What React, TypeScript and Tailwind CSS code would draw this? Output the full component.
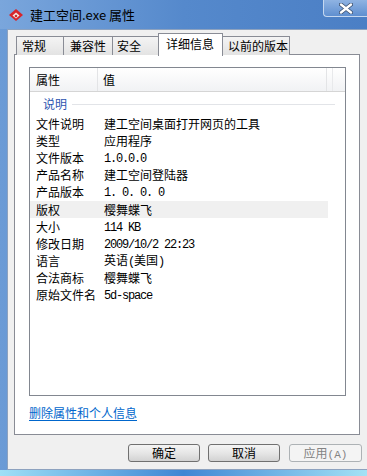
import React from "react";

const CJK = { fontFamily: '"Noto Sans CJK SC", "Noto Sans", sans-serif' };

function Txt({ s }: { s: string }) {
  const parts = s.match(/[\x20-\x7e]+|[^\x20-\x7e]+/g) || [];
  return (
    <>
      {parts.map((p, i) =>
        /^[\x20-\x7e]+$/.test(p) ? (
          <span
            key={i}
            className="text-[12px] tracking-[-1.2px] whitespace-pre"
            style={{ fontFamily: '"Liberation Mono", monospace' }}
          >
            {p}
          </span>
        ) : (
          <span key={i}>{p}</span>
        )
      )}
    </>
  );
}

const rows: [string, string][] = [
  ["文件说明", "建工空间桌面打开网页的工具"],
  ["类型", "应用程序"],
  ["文件版本", "1.0.0.0"],
  ["产品名称", "建工空间登陆器"],
  ["产品版本", "1. 0. 0. 0"],
  ["版权", "樱舞蝶飞"],
  ["大小", "114 KB"],
  ["修改日期", "2009/10/2 22:23"],
  ["语言", "英语(美国)"],
  ["合法商标", "樱舞蝶飞"],
  ["原始文件名", "5d-space"],
];

function Tab({ label, w, pl }: { label: string; w: string; pl: string }) {
  return (
    <div
      className={`${w} ${pl} h-[19px] border border-b-0 border-[#898c95] bg-gradient-to-b from-[#f4f4f4] to-[#e3e3e3] text-[12px] leading-[18px] text-black -ml-px first:ml-0`}
    >
      {label}
    </div>
  );
}

export default function App() {
  return (
    <div
      className="w-[367px] h-[476px] overflow-hidden flex flex-col relative bg-gradient-to-r from-[#6b9bd6] via-[#4d82c8] to-[#5b8fd0]"
      style={CJK}
    >
      {/* title bar */}
      <div className="h-[29px] flex items-center pl-[8px] shrink-0 bg-gradient-to-r from-[#7aa6dc] via-[#5589cc] to-[#4b7fc5]">
        <svg width="16" height="14" viewBox="0 0 16 14">
          <path d="M8 1 L15 7 L8 13 L1 7 Z" fill="#d8252a" />
          <path d="M8 4.5 L11.5 7.5 L8 10.5 L4.5 7.5 Z" fill="#f4e6e0" />
          <path d="M8 6.5 L9.5 8 L8 9.5 L6.5 8 Z" fill="#c11a20" />
        </svg>
        <span className="ml-[6px] text-[13px] text-black leading-none">建工空间.exe 属性</span>
      </div>
      {/* close button */}
      <div className="absolute top-0 right-0 w-[44px] h-[17px] border-l border-b border-[#c5d8f0] rounded-bl-[4px] bg-gradient-to-b from-[#8fb3e2] to-[#5f8fd0] flex items-center justify-center">
        <svg width="14" height="11" viewBox="0 0 14 11">
          <path d="M2 1.5 L12 9.5 M12 1.5 L2 9.5" stroke="#3a4f6e" strokeWidth="4" strokeLinecap="round" />
          <path d="M2 1.5 L12 9.5 M12 1.5 L2 9.5" stroke="#ffffff" strokeWidth="2.4" strokeLinecap="round" />
        </svg>
      </div>

      {/* body */}
      <div className="ml-[7px] h-[441px] shrink-0 bg-[#f0f0f0] border-l border-t border-b border-[#8da2bf] flex flex-col">
        {/* tabs */}
        <div className="h-[25px] flex items-end pl-[8px] relative z-10 shrink-0">
          <Tab label="常规" w="w-[48px]" pl="pl-[5px]" />
          <Tab label="兼容性" w="w-[50px]" pl="pl-[6px]" />
          <Tab label="安全" w="w-[47px]" pl="pl-[4px]" />
          <div className="-ml-px w-[65px] h-[23px] -mb-px border border-b-0 border-[#898c95] bg-white text-[12px] leading-[20px] pl-[7px] text-black">
            详细信息
          </div>
          <Tab label="以前的版本" w="w-[68px]" pl="pl-[5px]" />
        </div>
        {/* panel */}
        <div className="ml-[6px] w-[346px] h-[381px] -mt-px border border-[#898c95] bg-white flex flex-col shrink-0">
          <div className="mt-[12px] ml-[14px] w-[317px] h-[329px] border border-[#828790] bg-white flex flex-col">
            {/* header */}
            <div className="h-[24px] flex items-center bg-gradient-to-b from-[#ffffff] to-[#f1f2f4] border-b border-[#d5d5d5] text-[12px] text-black shrink-0">
              <div className="w-[68px] h-full flex items-center pl-[6px] border-r border-[#e3e4e6]">属性</div>
              <div className="w-[229px] h-full flex items-center pl-[5px] border-r border-[#e3e4e6]">值</div>
              <div className="w-[6px] h-full border-r border-[#e8e9eb]"></div>
            </div>
            {/* group */}
            <div className="h-[22px] flex items-center pl-[13px] pr-[10px] shrink-0 mt-[1px]">
              <span className="text-[12px] text-[#2c55b0]">说明</span>
              <div className="flex-1 h-px bg-[#e2e4e8] ml-[5px]"></div>
            </div>
            <div className="flex flex-col">
              {rows.map(([k, v], i) => (
                <div
                  key={i}
                  className={`h-[17.2px] w-[298px] flex items-center text-[12px] text-black ${
                    k === "版权" ? "bg-[#f0f0f0]" : ""
                  }`}
                >
                  <div className="w-[68px] pl-[6px] whitespace-nowrap">{k}</div>
                  <div className="pl-[6px] whitespace-nowrap">
                    <Txt s={v} />
                  </div>
                </div>
              ))}
            </div>
          </div>
          <div className="ml-[14px] mt-[9px] text-[12px] leading-[16px] text-[#0066cc] underline underline-offset-2">
            删除属性和个人信息
          </div>
        </div>
        {/* buttons */}
        <div className="flex mt-[9px] pl-[120px] gap-[8px] shrink-0">
          <div className="w-[72px] h-[18px] rounded-[3px] border border-[#707070] bg-gradient-to-b from-[#f4f4f4] via-[#e6e6e6] to-[#d2d2d2] text-[12px] leading-[16px] text-center text-black">
            确定
          </div>
          <div className="w-[72px] h-[18px] rounded-[3px] border border-[#707070] bg-gradient-to-b from-[#f4f4f4] via-[#e6e6e6] to-[#d2d2d2] text-[12px] leading-[16px] text-center text-black">
            取消
          </div>
          <div className="ml-px w-[73px] h-[18px] rounded-[3px] border border-[#adb2b5] bg-[#f4f4f4] text-[12px] leading-[16px] text-center text-[#838383]">
            应用<span className="text-[11px]" style={{ fontFamily: '"Liberation Mono", monospace' }}>(A)</span>
          </div>
        </div>
      </div>
      {/* bottom frame */}
      <div className="flex-1 bg-gradient-to-r from-[#9ee0f6] via-[#3f86d3] to-[#a4e2f5]"></div>
    </div>
  );
}
